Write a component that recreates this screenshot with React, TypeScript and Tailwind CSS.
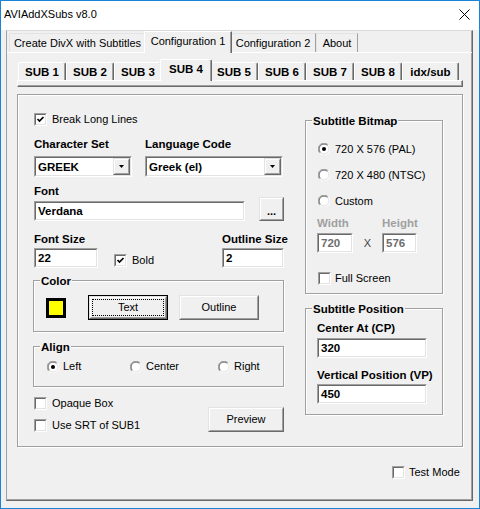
import React from "react";

type Box = { children?: React.ReactNode; className?: string };

// classic sunken 3D edge (text boxes, check boxes)
function Sunken({ children, className = "", fill = "bg-white" }: Box & { fill?: string }) {
  return (
    <div className={"border border-t-[#a0a0a0] border-l-[#a0a0a0] border-r-white border-b-white " + className}>
      <div className={"flex h-full w-full items-center border border-t-[#696969] border-l-[#696969] border-r-[#e3e3e3] border-b-[#e3e3e3] " + fill}>
        {children}
      </div>
    </div>
  );
}

// classic raised 3D edge (buttons)
function Raised({ children, className = "" }: Box) {
  return (
    <div className={"border border-t-[#e3e3e3] border-l-[#e3e3e3] border-r-[#696969] border-b-[#696969] bg-[#f0f0f0] " + className}>
      <div className="flex h-full w-full items-center justify-center border border-t-white border-l-white border-r-[#a0a0a0] border-b-[#a0a0a0]">
        {children}
      </div>
    </div>
  );
}

function DefaultButton({ children, className = "" }: Box) {
  return (
    <div className={"border border-black " + className}>
      <Raised className="h-full w-full">
        <div className="m-[1px] flex flex-1 items-center justify-center self-stretch border border-dotted border-black">
          {children}
        </div>
      </Raised>
    </div>
  );
}

function Label({ children, className = "" }: Box) {
  return <span className={"whitespace-nowrap text-[11.5px] font-bold leading-[14px] " + className}>{children}</span>;
}

function Field({ value, className = "", disabled = false }: { value: string; className?: string; disabled?: boolean }) {
  return (
    <Sunken className={className}>
      <span className={"pl-[2px] text-[11.5px] font-bold leading-[14px] " + (disabled ? "text-[#6d6d6d]" : "text-black")}>
        {value}
      </span>
    </Sunken>
  );
}

function Combo({ value, className = "" }: { value: string; className?: string }) {
  return (
    <Sunken className={className}>
      <span className="flex-1 pl-[2px] text-[11.5px] font-bold leading-[14px]">{value}</span>
      <Raised className="h-full w-[17px]">
        <svg width="5" height="3" viewBox="0 0 5 3">
          <path d="M0 0h5L2.5 3z" fill="black" />
        </svg>
      </Raised>
    </Sunken>
  );
}

function Check({ on = false }: { on?: boolean }) {
  return (
    <Sunken className="h-[13px] w-[13px] shrink-0">
      {on && (
        <svg width="9" height="9" viewBox="0 0 9 9">
          <path d="M1.5 4 L3.5 6 L7.5 2" stroke="black" strokeWidth="1.7" fill="none" />
        </svg>
      )}
    </Sunken>
  );
}

function CheckRow({ on = false, label, gap = "gap-[5px]" }: { on?: boolean; label: string; gap?: string }) {
  return (
    <div className={"flex h-[13px] items-center " + gap}>
      <Check on={on} />
      <span className="whitespace-nowrap leading-[13px]">{label}</span>
    </div>
  );
}

function Radio({ on = false }: { on?: boolean }) {
  return (
    <svg width="12" height="12" viewBox="0 0 12 12" className="shrink-0">
      <circle cx="6" cy="6" r="5" fill="white" />
      <path d="M1.8 10.2 A5.5 5.5 0 0 1 10.2 1.8" stroke="#a0a0a0" fill="none" />
      <path d="M2.5 9.5 A4.5 4.5 0 0 1 9.5 2.5" stroke="#696969" fill="none" />
      <path d="M10.2 1.8 A5.5 5.5 0 0 1 1.8 10.2" stroke="white" fill="none" />
      <path d="M9.5 2.5 A4.5 4.5 0 0 1 2.5 9.5" stroke="#e3e3e3" fill="none" />
      {on && <circle cx="6" cy="6" r="2" fill="black" />}
    </svg>
  );
}

function RadioRow({ on = false, label, className = "", gap = "gap-[5px]" }: { on?: boolean; label: string; className?: string; gap?: string }) {
  return (
    <div className={"flex h-[12px] items-center " + gap + " " + className}>
      <Radio on={on} />
      <span className="whitespace-nowrap leading-[13px]">{label}</span>
    </div>
  );
}

function Group({ label, className = "", children }: Box & { label: string }) {
  return (
    <div className={"relative border border-[#a0a0a0] shadow-[inset_1px_1px_0_white,1px_1px_0_white] " + className}>
      <span className="absolute -top-[7px] left-[6px] bg-[#f0f0f0] px-[1px] text-[11.5px] font-bold leading-[14px]">
        {label}
      </span>
      {children}
    </div>
  );
}

const outerTabs = [
  { name: "Create DivX with Subtitles", w: "w-[137px]" },
  { name: "Configuration 1", w: "w-[88px]", on: true },
  { name: "Configuration 2", w: "w-[86px]" },
  { name: "About", w: "w-[42px]" },
];

const subTabs = ["SUB 1", "SUB 2", "SUB 3", "SUB 4", "SUB 5", "SUB 6", "SUB 7", "SUB 8", "idx/sub"];

export default function App() {
  return (
    <div className="flex h-[509px] w-[480px] flex-col border border-[#1883d7] bg-[#f0f0f0] font-['Liberation_Sans',Arial,sans-serif] text-[11px] text-black">
      {/* Title bar */}
      <div className="flex h-[29px] shrink-0 items-start justify-between bg-white pl-[3px] pr-[9px]">
        <span className="pt-[6px] text-[11px] leading-[14px]">AVIAddXSubs v8.0</span>
        <svg className="mt-[8px]" width="11" height="11" viewBox="0 0 11 11">
          <path d="M0.5 0.5L10.5 10.5M10.5 0.5L0.5 10.5" stroke="black" strokeWidth="1" />
        </svg>
      </div>

      {/* Body */}
      <div className="flex flex-1 flex-col pb-[7px] pl-[5px] pr-[6px]">
        <div className="flex flex-1 flex-col border border-t-[#dadada] border-l-[#a0a0a0] border-r-[#696969] border-b-[#696969] shadow-[inset_-1px_-1px_0_#a0a0a0]">
          {/* Outer tabs */}
          <div className="flex h-[22px] shrink-0 items-end border-b border-b-white pl-[2px]">
            {outerTabs.map((t) =>
              t.on ? (
                <div
                  key={t.name}
                  className={"relative z-10 -mx-[2px] -mb-[1px] flex h-[22px] items-start justify-center border-t border-l border-r border-t-white border-l-white border-r-[#696969] bg-[#f0f0f0] pt-[2px] leading-[14px] shadow-[inset_-1px_0_0_#a0a0a0] " + t.w}
                >
                  {t.name}
                </div>
              ) : (
                <div
                  key={t.name}
                  className={"flex h-[19px] items-center justify-center border-t border-l border-r border-t-[#e3e3e3] border-l-[#e3e3e3] border-r-[#a0a0a0] leading-[14px] " + t.w}
                >
                  {t.name}
                </div>
              )
            )}
          </div>

          {/* Tab page */}
          <div className="flex flex-1 flex-col pl-[10px] pt-[6px]">
            {/* SUB tabs */}
            <div className="flex h-[21px] items-end pl-[1px]">
              {subTabs.map((s) =>
                s === "SUB 4" ? (
                  <div
                    key={s}
                    className="relative z-10 -mx-[2px] -mb-[1px] flex h-[22px] w-[52px] items-start justify-center rounded-t-[2px] border-t border-l border-r border-t-white border-l-white border-r-[#696969] bg-[#f0f0f0] pt-[2px] text-[11.5px] font-bold leading-[14px] shadow-[inset_-1px_0_0_#a0a0a0]"
                  >
                    {s}
                  </div>
                ) : (
                  <div
                    key={s}
                    className={
                      "flex h-[18px] items-center justify-center rounded-t-[2px] border-t border-l border-r border-t-white border-l-white border-r-[#696969] text-[11.5px] font-bold leading-[14px] shadow-[inset_-1px_0_0_#a0a0a0] " +
                      (s === "idx/sub" ? "w-[57px]" : "w-[48px]")
                    }
                  >
                    {s}
                  </div>
                )
              )}
            </div>
            <div className="h-[7px] w-[446px] border border-t-white border-l-white border-r-[#696969] border-b-[#696969] shadow-[inset_-1px_-1px_0_#a0a0a0]" />

            {/* Settings frame */}
            <div className="mt-[7px] flex h-[353px] w-[446px] border border-[#a0a0a0] pl-[15px] shadow-[inset_1px_1px_0_white,1px_1px_0_white]">
              {/* Left column */}
              <div className="flex w-[251px] shrink-0 flex-col">
                <div className="mt-[18px] pl-[1px]">
                  <CheckRow on label="Break Long Lines" />
                </div>

                <div className="mt-[11px] flex pl-[1px]">
                  <div className="flex w-[111px] flex-col">
                    <Label>Character Set</Label>
                    <Combo className="mt-[5px] h-[21px] w-[98px]" value="GREEK" />
                  </div>
                  <div className="flex flex-col">
                    <Label>Language Code</Label>
                    <Combo className="mt-[5px] h-[21px] w-[138px]" value="Greek (el)" />
                  </div>
                </div>

                <div className="mt-[7px] flex items-end pl-[1px]">
                  <div className="flex flex-col">
                    <Label>Font</Label>
                    <Field className="mt-[3px] h-[20px] w-[211px]" value="Verdana" />
                  </div>
                  <Raised className="ml-[14px] h-[24px] w-[25px]">
                    <span className="pt-[4px] text-[11px] font-bold leading-[14px]">...</span>
                  </Raised>
                </div>

                <div className="mt-[11px] flex items-end pl-[1px]">
                  <div className="flex w-[80px] shrink-0 flex-col">
                    <Label>Font Size</Label>
                    <Field className="mt-[2px] h-[20px] w-[64px]" value="22" />
                  </div>
                  <div className="mb-[1px] w-[108px] shrink-0">
                    <CheckRow on label="Bold" />
                  </div>
                  <div className="flex w-[62px] shrink-0 flex-col">
                    <Label>Outline Size</Label>
                    <Field className="mt-[2px] h-[20px] w-[62px]" value="2" />
                  </div>
                </div>

                <Group label="Color" className="mt-[12px] h-[52px]">
                  <div className="flex items-center pl-[12px] pt-[14px]">
                    <div className="h-[20px] w-[20px] border-[3px] border-black bg-[#ffff00]" />
                    <DefaultButton className="ml-[22px] h-[25px] w-[80px]">Text</DefaultButton>
                    <Raised className="ml-[11px] h-[25px] w-[80px]">Outline</Raised>
                  </div>
                </Group>

                <Group label="Align" className="mt-[14px] h-[41px]">
                  <div className="flex h-full items-center pl-[13px]">
                    <RadioRow on label="Left" gap="gap-[4px]" className="w-[83px]" />
                    <RadioRow label="Center" gap="gap-[4px]" className="w-[88px]" />
                    <RadioRow label="Right" gap="gap-[4px]" />
                  </div>
                </Group>

                <div className="mt-[10px] flex">
                  <div className="flex flex-col gap-[9px] pl-[1px]">
                    <CheckRow label="Opaque Box" />
                    <CheckRow label="Use SRT of SUB1" />
                  </div>
                  <Raised className="ml-auto mt-[10px] h-[25px] w-[76px]">Preview</Raised>
                </div>
              </div>

              {/* Right column */}
              <div className="ml-[21px] flex w-[138px] shrink-0 flex-col">
                <Group label="Subtitle Bitmap" className="mt-[25px] h-[174px]">
                  <div className="flex flex-col gap-[14px] pl-[12px] pt-[22px]">
                    <RadioRow on label="720 X 576 (PAL)" />
                    <RadioRow label="720 X 480 (NTSC)" />
                    <RadioRow label="Custom" />
                  </div>
                  <div className="mt-[9px] grid grid-cols-[65px_1fr] pl-[11px] text-[#a0a0a0]">
                    <Label>Width</Label>
                    <Label>Height</Label>
                  </div>
                  <div className="mt-[3px] flex items-center pl-[11px]">
                    <Field disabled className="h-[20px] w-[36px]" value="720" />
                    <span className="w-[29px] text-center leading-[14px] text-[#444]">X</span>
                    <Field disabled className="h-[20px] w-[35px]" value="576" />
                  </div>
                  <div className="mt-[19px] pl-[12px]">
                    <CheckRow label="Full Screen" gap="gap-[4px]" />
                  </div>
                </Group>

                <Group label="Subtitle Position" className="mt-[14px] h-[107px]">
                  <div className="flex flex-col pl-[11px] pt-[12px]">
                    <Label>Center At (CP)</Label>
                    <Field className="mt-[3px] h-[20px] w-[110px]" value="320" />
                    <Label className="mt-[10px]">Vertical Position (VP)</Label>
                    <Field className="mt-[2px] h-[20px] w-[110px]" value="450" />
                  </div>
                </Group>
              </div>
            </div>

            <div className="ml-[375px] mt-[19px]">
              <CheckRow label="Test Mode" gap="gap-[4px]" />
            </div>
          </div>
        </div>
      </div>
    </div>
  );
}
